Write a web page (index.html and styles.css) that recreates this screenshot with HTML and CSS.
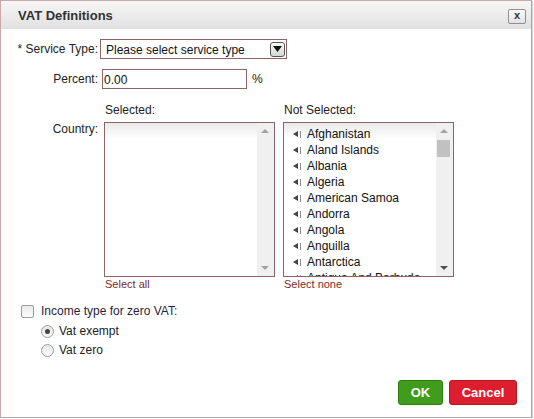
FILE: index.html
```html
<!DOCTYPE html>
<html>
<head>
<meta charset="utf-8">
<link rel="stylesheet" href="styles.css">
</head>
<body>
<div class="dialog">
  <div class="titlebar">
    <span class="title">VAT Definitions</span>
    <span class="close">x</span>
  </div>
  <div class="content">
    <div class="row row-service">
      <label class="lbl lbl-service">* Service Type:</label>
      <div class="select">
        <span class="select-text">Please select service type</span>
        <span class="select-btn"><svg width="9" height="6" viewBox="0 0 9 6"><path d="M0 0H9L4.5 6Z" fill="#111"/></svg></span>
      </div>
    </div>
    <div class="row row-percent">
      <label class="lbl">Percent:</label>
      <div class="input">0.00</div>
      <span class="pct">%</span>
    </div>
    <div class="row row-heads">
      <span class="lbl"></span>
      <span class="head head-sel">Selected:</span>
      <span class="head">Not Selected:</span>
    </div>
    <div class="row row-lists">
      <label class="lbl lbl-country">Country:</label>
      <div class="listcol">
        <div class="listbox">
          <div class="items"></div>
          <div class="scroll">
            <span class="arr-up light"></span>
            <span class="arr-down light"></span>
          </div>
        </div>
        <a class="link">Select all</a>
      </div>
      <div class="listcol">
        <div class="listbox">
          <div class="items">
            <div class="item"><i class="mv"></i>Afghanistan</div>
            <div class="item"><i class="mv"></i>Aland Islands</div>
            <div class="item"><i class="mv"></i>Albania</div>
            <div class="item"><i class="mv"></i>Algeria</div>
            <div class="item"><i class="mv"></i>American Samoa</div>
            <div class="item"><i class="mv"></i>Andorra</div>
            <div class="item"><i class="mv"></i>Angola</div>
            <div class="item"><i class="mv"></i>Anguilla</div>
            <div class="item"><i class="mv"></i>Antarctica</div>
            <div class="item"><i class="mv"></i>Antigua And Barbuda</div>
          </div>
          <div class="scroll">
            <span class="arr-up light"></span>
            <span class="thumb"></span>
            <span class="arr-down dark"></span>
          </div>
        </div>
        <a class="link">Select none</a>
      </div>
    </div>
    <div class="check-row">
      <span class="checkbox"></span>
      <span class="check-label">Income type for zero VAT:</span>
    </div>
    <div class="radio-row">
      <span class="radio checked"></span>
      <span class="radio-label">Vat exempt</span>
    </div>
    <div class="radio-row">
      <span class="radio"></span>
      <span class="radio-label">Vat zero</span>
    </div>
    <div class="buttons">
      <button class="btn btn-ok">OK</button>
      <button class="btn btn-cancel">Cancel</button>
    </div>
  </div>
</div>
</body>
</html>
```
FILE: styles.css
```css
* { box-sizing: border-box; }
html, body {
  margin: 0;
  padding: 0;
  background: #ffffff;
}
body {
  font-family: "Liberation Sans", Arial, sans-serif;
  font-size: 12px;
  color: #222;
}
.dialog {
  width: 532px;
  height: 418px;
  border: 1px solid #c9a8a8;
  border-right-color: #b9a0a0;
  border-bottom-color: #b0a8a8;
  box-shadow: 1px 1px 1px #d8d8d8;
  background: #fff;
  display: flex;
  flex-direction: column;
}
.titlebar {
  height: 28px;
  background: linear-gradient(#f7f7f7, #e0e0e0);
  display: flex;
  align-items: center;
  justify-content: space-between;
  padding: 0 5px 0 17px;
}
.title {
  font-weight: bold;
  font-size: 13px;
  color: #333;
  padding-top: 1px;
}
.close {
  width: 18px;
  height: 15px;
  border: 1px solid #8e8e8e;
  border-radius: 2px;
  background: linear-gradient(#fdfdfd, #e2e2e2);
  font-size: 11px;
  font-weight: bold;
  line-height: 11px;
  text-align: center;
  color: #333;
  margin-top: 2px;
}
.content {
  flex: 1;
  display: flex;
  flex-direction: column;
  padding: 10px 0 0 0;
}
.row {
  display: flex;
  align-items: center;
}
.lbl {
  width: 99px;
  flex: none;
  text-align: right;
  padding-right: 2px;
  font-size: 12px;
  color: #222;
}
.select {
  width: 187px;
  height: 20px;
  border: 1px solid #8c6464;
  display: flex;
  align-items: center;
  justify-content: space-between;
  padding: 0 1px 0 5px;
}
.select-text {
  font-size: 12px;
  color: #111;
  padding-top: 2px;
}
.select-btn {
  width: 15px;
  height: 15px;
  border: 1px solid #555;
  border-radius: 3px;
  background: linear-gradient(#fbfbfb, #d6d6d6);
  display: flex;
  align-items: center;
  justify-content: center;
}
.row-percent { margin-top: 10px; }
.input {
  width: 145px;
  height: 20px;
  border: 1px solid #8c6464;
  margin-left: 2px;
  padding: 3px 0 0 1px;
  font-size: 12px;
  color: #111;
  line-height: 14px;
}
.pct {
  margin-left: 5px;
  font-size: 12px;
  color: #222;
}
.row-heads {
  margin-top: 14px;
  height: 14px;
}
.head {
  font-size: 12px;
  color: #222;
}
.head-sel {
  width: 184px;
  padding-left: 5px;
}
.row-lists {
  margin-top: 5px;
  align-items: flex-start;
}
.listcol {
  display: flex;
  flex-direction: column;
  margin-left: 4px;
  margin-right: 8px;
}
.listcol + .listcol { margin-left: 0; }
.listbox {
  width: 171px;
  height: 155px;
  border: 1px solid #8c6464;
  display: flex;
  overflow: hidden;
  background: linear-gradient(#e9e9e9, #ffffff 16px);
}
.items {
  flex: 1;
  padding: 3px 0 0 9px;
  overflow: hidden;
}
.item {
  height: 16px;
  line-height: 16px;
  font-size: 12px;
  color: #111;
  white-space: nowrap;
  display: flex;
  align-items: center;
}
.mv {
  display: inline-block;
  width: 6px;
  height: 7px;
  margin-right: 8px;
  position: relative;
}
.mv::before {
  content: "";
  position: absolute;
  left: 0;
  top: 0;
  border-top: 3.5px solid transparent;
  border-bottom: 3.5px solid transparent;
  border-right: 5px solid #444;
}
.mv::after {
  content: "";
  position: absolute;
  left: 7px;
  top: 0;
  width: 1px;
  height: 7px;
  background: #888;
}
.scroll {
  width: 17px;
  flex: none;
  background: #f0f0f0;
  position: relative;
}
.arr-up, .arr-down {
  position: absolute;
  left: 4px;
  width: 0;
  height: 0;
  border-left: 4px solid transparent;
  border-right: 4px solid transparent;
}
.arr-up { top: 6px; border-bottom: 4px solid #a3a3a3; }
.arr-down { bottom: 6px; border-top: 4px solid #a3a3a3; }
.arr-down.dark { border-top-color: #505050; }
.thumb {
  position: absolute;
  left: 1px;
  top: 17px;
  width: 13px;
  height: 17px;
  background: #c1c1c1;
}
.link {
  font-size: 11px;
  color: #7b2b2b;
  margin-top: 1px;
  line-height: 12px;
  padding-left: 1px;
}
.check-row {
  display: flex;
  align-items: center;
  margin-top: 14px;
  padding-left: 20px;
  height: 14px;
}
.checkbox {
  width: 13px;
  height: 13px;
  border: 1px solid #9a9a9a;
  border-radius: 2px;
  background: linear-gradient(#ececec, #fafafa);
}
.check-label {
  margin-left: 7px;
  font-size: 12px;
  color: #2a1f3a;
}
.radio-row {
  display: flex;
  align-items: center;
  padding-left: 40px;
  margin-top: 6px;
  height: 14px;
}
.radio-row + .radio-row { margin-top: 5px; }
.radio {
  width: 13px;
  height: 13px;
  border: 1px solid #a0a0a0;
  border-radius: 50%;
  background: linear-gradient(#e6e6e6, #fafafa);
  position: relative;
}
.radio.checked::after {
  content: "";
  position: absolute;
  left: 3px;
  top: 3px;
  width: 5px;
  height: 5px;
  border-radius: 50%;
  background: #444;
}
.radio-label {
  margin-left: 5px;
  font-size: 12px;
  color: #222;
}
.buttons {
  display: flex;
  justify-content: flex-end;
  gap: 6px;
  margin-top: 23px;
  padding-right: 14px;
}
.btn {
  height: 25px;
  border-radius: 3px;
  color: #fff;
  font-family: "Liberation Sans", Arial, sans-serif;
  font-weight: bold;
  font-size: 13px;
  padding: 0;
  cursor: pointer;
}
.btn-ok {
  width: 45px;
  background: #3f9c1c;
  border: 1px solid #2e7c12;
}
.btn-cancel {
  width: 68px;
  background: #dc1e2e;
  border: 1px solid #b5151f;
}
```
